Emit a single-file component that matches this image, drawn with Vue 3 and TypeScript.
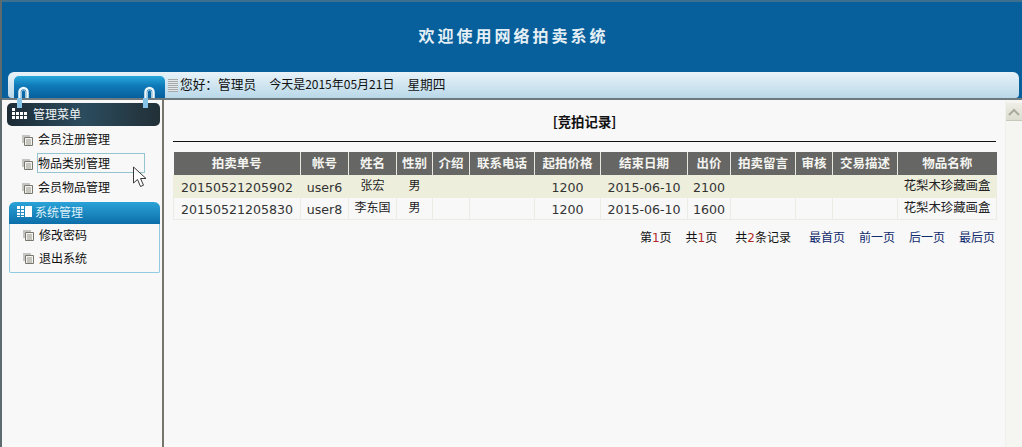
<script setup lang="ts">
const cols = [127, 48, 48, 36, 37, 65, 66, 87, 43, 65, 37, 65, 99]
const heads = ['拍卖单号','帐号','姓名','性别','介绍','联系电话','起拍价格','结束日期','出价','拍卖留言','审核','交易描述','物品名称']
const rows = [
  ['20150521205902','user6','张宏','男','','','1200','2015-06-10','2100','','','','花梨木珍藏画盒'],
  ['20150521205830','user8','李东国','男','','','1200','2015-06-10','1600','','','','花梨木珍藏画盒'],
]
const cjkCols = [2, 3, 12]
const menuA = ['会员注册管理','物品类别管理','会员物品管理']
const menuB = ['修改密码','退出系统']
const links = ['最首页','前一页','后一页','最后页']
</script>

<template>
  <div class="page">
    <header class="banner"><h1>欢迎使用网络拍卖系统</h1></header>
    <div class="navbar">
      <div class="tab"></div>
      <div class="grip"></div>
      <div class="greet">您好：管理员<span class="today">今天是2015年05月21日</span><span class="week">星期四</span></div>
    </div>
    <div class="body">
      <aside class="side">
        <svg v-for="c in ['h1', 'h2']" :key="c" class="hook" :class="c" width="14" height="24" viewBox="0 0 14 24">
          <path fill="none" stroke="#eef7fb" stroke-width="2.500" d="M3.500 13V7a4 4 0 0 1 8 0v6"/>
          <path fill="none" stroke="#9cc6dc" stroke-width="1" d="M5.500 13V7a2 2 0 0 1 4 0v6"/>
          <path fill="#86c3e6" d="M1 13h5v10H1z"/>
        </svg>
        <div class="mhead">
          <svg width="16" height="12" viewBox="0 0 16 12"><path fill="#fff" d="M0 0h3v3H0zM0 4h3v3H0zM4 4h3v3H4zM8 4h3v3H8zM12 4h3v3h-3zM0 8h3v3H0zM4 8h3v3H4zM8 8h3v3H8zM12 8h3v3h-3z"/></svg>
          <span>管理菜单</span>
        </div>
        <ul class="list first">
          <li v-for="(m, i) in menuA" :key="m" :class="{ hot: i === 1 }">
            <svg class="ic" width="11" height="11" viewBox="0 0 11 11"><path fill="#c4c4c0" d="M0 0h8v2H2v6H0z"/><path fill="#f2f2ee" stroke="#77776f" d="M2.500 2.500h8v8h-8z"/><path stroke="#99998f" d="M4 5h5M4 7h5M4 9h5"/></svg>
            <span class="lbl">{{ m }}</span>
          </li>
        </ul>
        <svg class="cursor" width="16" height="22" viewBox="0 0 16 22"><path fill="#fff" stroke="#3a3a3a" d="M1.500 1v16l4-3.500 3 7 3-1.300-3-6.700h5.500z"/></svg>
        <div class="sys">
          <div class="shead">
            <svg width="15" height="13" viewBox="0 0 15 13"><path fill="#fff" d="M0 1h7v11H0zM8 1h7v11H8z"/><path stroke="#2a8fc4" d="M3.500 1v11M0 4.500h7M0 7.500h7M0 10.500h7"/></svg>
            <span>系统管理</span>
          </div>
          <ul class="list second">
            <li v-for="m in menuB" :key="m">
              <svg class="ic" width="11" height="11" viewBox="0 0 11 11"><path fill="#c4c4c0" d="M0 0h8v2H2v6H0z"/><path fill="#f2f2ee" stroke="#77776f" d="M2.500 2.500h8v8h-8z"/><path stroke="#99998f" d="M4 5h5M4 7h5M4 9h5"/></svg>
              <span class="lbl">{{ m }}</span>
            </li>
          </ul>
        </div>
      </aside>
      <main class="main">
        <div class="content">
          <h2>[竞拍记录]</h2>
          <table>
            <colgroup><col v-for="(w, i) in cols" :key="i" :style="{ width: w + 'px' }" /></colgroup>
            <thead><tr><th v-for="h in heads" :key="h">{{ h }}</th></tr></thead>
            <tbody>
              <tr v-for="(r, ri) in rows" :key="ri" :class="{ odd: ri === 0 }">
                <td v-for="(c, ci) in r" :key="ci" :class="{ cjk: cjkCols.includes(ci), lift: ci === 2 || ci === 3 || ci === 12, wide: ci === 12 }">{{ c }}</td>
              </tr>
            </tbody>
          </table>
          <div class="pager">
            <span>第<b>1</b>页</span><span>共<b>1</b>页</span><span class="total">共<b>2</b>条记录</span>
            <a v-for="l in links" :key="l">{{ l }}</a>
          </div>
        </div>
        <div class="scroll">
          <div class="up"><svg width="12" height="8" viewBox="0 0 12 8"><path fill="none" stroke="#a8ab9c" stroke-width="2" d="M1 7l5-5 5 5"/></svg></div>
        </div>
      </main>
    </div>
  </div>
</template>

<style>
html, body { margin: 0; background: #f8f8f8; overflow: hidden; }
</style>

<style scoped>
.page {
  width: 1022px; height: 447px; overflow: hidden; display: flex; flex-direction: column;
  box-sizing: border-box; border-left: 2px solid #5d6a6e; background: #f8f8f8;
  font-family: "Noto Sans CJK SC", sans-serif; font-size: 12px; color: #111;
}
.banner {
  height: 70px; flex: none; background: #07609c; border-top: 2px solid #3f6f8f;
  display: flex; align-items: center; justify-content: center;
}
.banner h1 { margin: 0 0 4px 3px; font-size: 16px; font-weight: 700; letter-spacing: 3px; color: #e4eff5; line-height: 20px; }
.navbar {
  height: 26px; flex: none; padding: 0 5px 0 6px; position: relative; display: flex; align-items: center;
  background: #07609c;
}
.navbar::before {
  content: ""; position: absolute; left: 6px; right: 3px; top: 0; bottom: 0; border-radius: 6px 6px 4px 4px;
  background: linear-gradient(#e8f3f9, #b9d8e8);
}
.tab {
  position: relative; width: 151px; height: 22px; margin: 4px 0 0 6px; flex: none; border-radius: 5px 5px 0 0;
  background: linear-gradient(#28a9dc, #0f79b8 45%, #075f9d);
}
.grip {
  position: relative; width: 10px; height: 13px; margin: 0 2px 0 3px; flex: none;
  background: repeating-linear-gradient(#a5a9aa 0 1px, #e0e6ea 1px 2px);
}
.greet { position: relative; font-size: 12.700px; line-height: 16px; white-space: nowrap; top: -1px; }
.today { margin-left: 13px; font-size: 12px; }
.week { margin-left: 13px; }
.body { flex: 1; display: flex; min-height: 0; border-top: 2px solid #6d7a80; }
.side {
  width: 155px; flex: none; position: relative; display: flex; flex-direction: column;
  border-right: 2px solid #77756b; background: #f8f8f8; padding: 3px 0 0 5px;
}
.hook { position: absolute; top: -15px; }
.h1 { left: 14px; } .h2 { left: 140px; }
.mhead {
  width: 153px; height: 23px; flex: none; box-sizing: border-box; padding: 0 0 2px 5px; border-radius: 5px;
  background: linear-gradient(90deg, #1d2c36, #2b4c5e 50%, #223037); color: #f1f5f7; display: flex; align-items: center; gap: 5px; font-size: 12px;
}
.list { list-style: none; margin: 0; padding: 0; }
.list li { display: flex; align-items: center; height: 24px; padding-left: 15px; font-size: 12px; }
.list.first { margin-top: 1px; }
.list .ic { flex: none; margin-right: 5px; margin-top: 2px; }
.list .lbl { line-height: 18px; }
.list .hot .lbl { width: 106px; height: 18px; border: 1px solid #93c4d0; margin: 0 0 0 -1px; }
.cursor { position: absolute; left: 130px; top: 66px; }
.sys { margin: 3px 0 0 2px; width: 151px; height: 71px; flex: none; box-sizing: border-box; border: 1px solid #90cbe2; border-top: 0; border-radius: 6px 6px 2px 2px; }
.shead {
  height: 22px; margin: 0 -1px; padding: 0 0 3px 8px; box-sizing: border-box; display: flex; align-items: center; gap: 3px;
  border-radius: 6px 6px 0 0; background: linear-gradient(#2ba3d8, #0c6ea9); color: #dff0f8;
}
.list.second { margin-top: -1px; }
.list.second li { height: 23px; padding-left: 13px; }
.main { flex: 1; min-width: 0; display: flex; }
.content { flex: 1; min-width: 0; padding: 0 9px; }
h2 {
  margin: 0; height: 42px; box-sizing: border-box; border-bottom: 1px solid #111; text-align: center;
  font-size: 13.400px; font-weight: 700; line-height: 43px;
}
table { margin-top: 10px; width: 823px; table-layout: fixed; border-collapse: collapse; font-family: "DejaVu Sans", sans-serif; font-size: 12.600px; }
th {
  height: 23px; padding: 0 0 2px; box-sizing: border-box; background: #666664; color: #f4f4f0; border-left: 1px solid #e8e8e0; font-family: "Noto Sans CJK SC", sans-serif; font-size: 12.500px; font-weight: 700;
}
th:first-child { border-left: 0; }
td { height: 22px; padding: 2px 0 0; box-sizing: border-box; text-align: center; border: 1px solid #ecece6; white-space: nowrap; color: #333; }
.odd td { background: #eeeedd; border-color: #eeeedd; }
td.cjk { font-family: "Noto Sans CJK SC", sans-serif; font-size: 12px; color: #222; }
td.wide { font-size: 12.400px; }
td.lift { vertical-align: top; line-height: 18px; padding-top: 0; }
.pager { display: flex; justify-content: flex-end; height: 36px; padding: 8px 1px 0 0; box-sizing: border-box; gap: 14px; font-size: 12px; line-height: 18px; }
.pager b { color: #b02a2a; font-weight: 400; font-family: "DejaVu Sans", sans-serif; }
.pager .total { margin: 0 4px; }
.pager a { color: #102a6e; }
.scroll { width: 16px; flex: none; background: #f5f5f2; border-left: 1px solid #f0f0ec; }
.up { height: 17px; margin-top: 3px; background: linear-gradient(#eeeee6, #dcdcd0); display: flex; align-items: center; justify-content: center; border-bottom: 1px solid #c8c8b8; }
</style>
